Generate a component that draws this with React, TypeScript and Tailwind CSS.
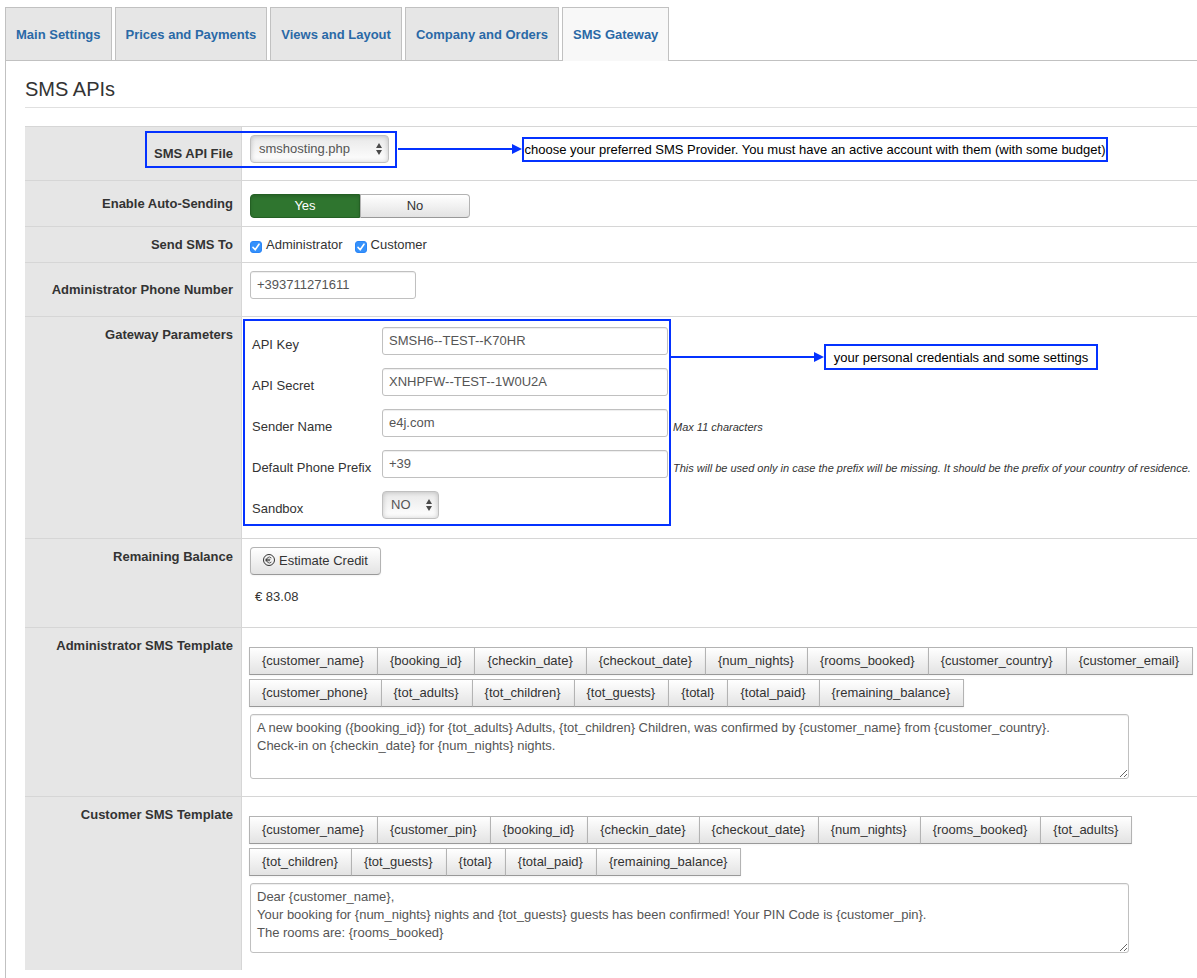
import React, { useState } from "react";

const tabs = [
  "Main Settings",
  "Prices and Payments",
  "Views and Layout",
  "Company and Orders",
  "SMS Gateway",
];

const adminTags = [
  "customer_name",
  "booking_id",
  "checkin_date",
  "checkout_date",
  "num_nights",
  "rooms_booked",
  "customer_country",
  "customer_email",
  "customer_phone",
  "tot_adults",
  "tot_children",
  "tot_guests",
  "total",
  "total_paid",
  "remaining_balance",
];

const customerTags = [
  "customer_name",
  "customer_pin",
  "booking_id",
  "checkin_date",
  "checkout_date",
  "num_nights",
  "rooms_booked",
  "tot_adults",
  "tot_children",
  "tot_guests",
  "total",
  "total_paid",
  "remaining_balance",
];

const adminMessage = `A new booking ({booking_id}) for {tot_adults} Adults, {tot_children} Children, was confirmed by {customer_name} from {customer_country}.
Check-in on {checkin_date} for {num_nights} nights.`;

const customerMessage = `Dear {customer_name},
Your booking for {num_nights} nights and {tot_guests} guests has been confirmed! Your PIN Code is {customer_pin}.
The rooms are: {rooms_booked}`;

const inputClass =
  "h-7 rounded-[3px] border border-[#c0c0c0] bg-white px-1.5 pb-0.5 text-[13px] text-[#555] shadow-[inset_0_1px_1px_rgba(0,0,0,0.07)] outline-none";

const Row = ({ label, htmlFor = undefined, middle = false, children }) => (
  <div className="relative flex border-t border-[#d6d6d6]">
    <div
      className={
        "flex w-[217px] shrink-0 justify-end border-r border-[#d6d6d6] bg-[#e6e6e6] px-2 font-bold " +
        (middle ? "items-center" : "items-start pt-[9px]")
      }
    >
      <label htmlFor={htmlFor}>{label}</label>
    </div>
    <div className="min-w-0 flex-1 py-2 pl-2">{children}</div>
  </div>
);

const Select = ({ id, className, options }) => (
  <div className={"relative h-7 " + className}>
    <select
      id={id}
      className="block h-7 w-full appearance-none rounded-[4px] border border-[#c0c0c0] bg-linear-to-b from-[#e8e8e8] to-white px-2 text-[13px] text-[#555] shadow-[inset_0_0_5px_rgba(0,0,0,0.2)] outline-none"
    >
      {options.map((o) => (
        <option key={o}>{o}</option>
      ))}
    </select>
    <svg
      viewBox="0 0 6 12"
      className="pointer-events-none absolute top-2 right-[7px] h-3 w-1.5 fill-[#4a4a4a]"
    >
      <path d="M3 0 6 5H0zM3 12 0 7h6z" />
    </svg>
  </div>
);

const Checkbox = ({ label }) => (
  <label className="flex items-center gap-1">
    <span className="relative mt-1 h-3 w-3">
      <input
        type="checkbox"
        defaultChecked
        className="peer block h-3 w-3 appearance-none rounded-[3px] border border-[#bbb] bg-white checked:border-[#2a85f7] checked:bg-[#3591fb]"
      />
      <svg
        viewBox="0 0 12 12"
        className="pointer-events-none absolute inset-0 hidden fill-none stroke-white stroke-[1.6] peer-checked:block"
      >
        <path d="M3 6.4 5.2 8.8 9 3.2" strokeLinecap="round" strokeLinejoin="round" />
      </svg>
    </span>
    {label}
  </label>
);

const TagButtons = ({ tags }) => (
  <div className="mt-[11px] mb-[7px] flex flex-wrap gap-y-1">
    {tags.map((t) => (
      <button
        key={t}
        type="button"
        className="-ml-px h-7 border border-[#b3b3b3] border-b-[#999] bg-linear-to-b from-white to-[#e3e3e3] pr-[13px] pl-3 shadow-[0_1px_2px_rgba(0,0,0,0.05)]"
      >
        {"{" + t + "}"}
      </button>
    ))}
  </div>
);

// arrow pointing at a boxed note
const Note = ({ className, arrowClass, textClass, children }) => (
  <div className={"absolute flex items-center text-black " + className}>
    <div className={"flex items-center " + arrowClass}>
      <div className="h-0.5 flex-1 bg-[#0432ff]" />
      <svg viewBox="0 0 10 10" className="h-2.5 w-2.5 fill-[#0432ff]">
        <path d="M0 0 10 5 0 10z" />
      </svg>
    </div>
    <div
      className={
        "flex items-center justify-center border-2 border-[#0432ff] bg-white whitespace-nowrap " +
        textClass
      }
    >
      {children}
    </div>
  </div>
);

const Param = ({ id, label, hint = "", children }) => (
  <div className="flex h-[37px] items-center pb-0.5">
    <label htmlFor={id} className="w-[130px] shrink-0">
      {label}
    </label>
    <div className="shrink-0 self-start">{children}</div>
    {hint && <em className="ml-[5px] text-[11px] whitespace-nowrap">{hint}</em>}
  </div>
);

const App = () => {
  const [active, setActive] = useState("SMS Gateway");
  const [autoSend, setAutoSend] = useState(true);

  return (
    <div className="flex min-h-screen flex-col overflow-hidden bg-white pt-[7px] pl-[5px] font-['Liberation_Sans',Arial,sans-serif] text-[13px] leading-[18px] text-[#333]">
      <nav className="flex gap-[3px]">
        {tabs.map((tab) => (
          <button
            key={tab}
            type="button"
            onClick={() => setActive(tab)}
            className={
              "relative -mb-px h-[54px] border border-[#c1c1c1] px-2.5 font-bold text-[#2a69a6] " +
              (tab === active ? "z-10 border-b-0 bg-[#f8f8f8]" : "bg-[#e6e6e6] pt-px")
            }
          >
            {tab}
          </button>
        ))}
      </nav>

      <main className="flex-1 border-t border-l border-[#c1c1c1] pt-2.5 pl-[19px]">
        <h1 className="mb-[18px] border-b border-[#e0e0e0] text-[20px] leading-9">SMS APIs</h1>

        <form>
          <Row label="SMS API File" htmlFor="api-file" middle>
            <Select id="api-file" className="mb-[9px] w-[139px]" options={["smshosting.php"]} />
            <div className="pointer-events-none absolute top-1 left-[120px] h-[37px] w-[252px] border-2 border-[#0432ff]" />
            <Note
              className="top-2.5 left-[373px]"
              arrowClass="w-[124px] pb-0.5"
              textClass="h-[25px] w-[586px]"
            >
              choose your preferred SMS Provider. You must have an active account with them (with
              some budget)
            </Note>
          </Row>

          <Row label="Enable Auto-Sending" middle>
            <div className="mt-[5px] flex">
              <button
                type="button"
                onClick={() => setAutoSend(true)}
                className={
                  "h-6 w-[110px] rounded-l-[4px] border " +
                  (autoSend
                    ? "border-[#246024] bg-[#2f752f] text-white shadow-[inset_0_2px_3px_rgba(0,0,0,0.15)]"
                    : "border-[#b3b3b3] bg-linear-to-b from-white to-[#e3e3e3]")
                }
              >
                Yes
              </button>
              <button
                type="button"
                onClick={() => setAutoSend(false)}
                className={
                  "h-6 w-[110px] rounded-r-[4px] border " +
                  (autoSend
                    ? "border-[#b3b3b3] border-b-[#999] bg-linear-to-b from-white to-[#e3e3e3]"
                    : "border-[#802420] bg-[#bd362f] text-white")
                }
              >
                No
              </button>
            </div>
          </Row>

          <Row label="Send SMS To" middle>
            <div className="flex gap-3 leading-[19px]">
              <Checkbox label="Administrator" />
              <Checkbox label="Customer" />
            </div>
          </Row>

          <Row label="Administrator Phone Number" htmlFor="admin-phone" middle>
            <input
              id="admin-phone"
              type="text"
              defaultValue="+393711271611"
              className={inputClass + " mb-[9px] block w-[166px]"}
            />
          </Row>

          <Row label="Gateway Parameters">
            <div className="flex flex-col gap-1 p-0.5">
              <Param id="api-key" label="API Key">
                <input
                  id="api-key"
                  type="text"
                  defaultValue="SMSH6--TEST--K70HR"
                  className={inputClass + " block w-[286px]"}
                />
              </Param>
              <Param id="api-secret" label="API Secret">
                <input
                  id="api-secret"
                  type="text"
                  defaultValue="XNHPFW--TEST--1W0U2A"
                  className={inputClass + " block w-[286px]"}
                />
              </Param>
              <Param id="sender" label="Sender Name" hint="Max 11 characters">
                <input
                  id="sender"
                  type="text"
                  defaultValue="e4j.com"
                  className={inputClass + " block w-[286px]"}
                />
              </Param>
              <Param
                id="prefix"
                label="Default Phone Prefix"
                hint="This will be used only in case the prefix will be missing. It should be the prefix of your country of residence."
              >
                <input
                  id="prefix"
                  type="text"
                  defaultValue="+39"
                  className={inputClass + " block w-[286px]"}
                />
              </Param>
              <Param id="sandbox" label="Sandbox">
                <Select id="sandbox" className="w-[57px]" options={["NO", "YES"]} />
              </Param>
            </div>
            <div className="pointer-events-none absolute top-0.5 left-[218px] h-[207px] w-[428px] border-2 border-[#0432ff]" />
            <Note
              className="top-[27px] left-[646px]"
              arrowClass="w-[153px]"
              textClass="h-[26px] w-[274px] pt-0.5"
            >
              your personal credentials and some settings
            </Note>
          </Row>

          <Row label="Remaining Balance">
            <button
              type="button"
              className="flex h-7 items-center gap-1 rounded-[4px] border border-[#b3b3b3] border-b-[#999] bg-linear-to-b from-white to-[#e3e3e3] px-3 shadow-[0_1px_2px_rgba(0,0,0,0.05)]"
            >
              <svg viewBox="0 0 12 12" className="mb-0.5 h-3 w-3 fill-none stroke-[#333]">
                <circle cx="6" cy="6" r="5.5" />
                <path
                  d="M8.4 4A2.9 2.9 0 1 0 8.4 8M2.3 5.3H7.4M2.3 6.7H7"
                  strokeWidth="0.8"
                />
              </svg>
              Estimate Credit
            </button>
            <div className="my-[13px] ml-[5px]">€ 83.08</div>
          </Row>

          <Row label="Administrator SMS Template" htmlFor="admin-sms">
            <TagButtons tags={adminTags} />
            <textarea
              id="admin-sms"
              defaultValue={adminMessage}
              className="mb-[9px] block h-[65px] w-[879px] resize rounded-[3px] border border-[#c0c0c0] bg-white px-1.5 py-1 text-[#555] shadow-[inset_0_1px_1px_rgba(0,0,0,0.07)] outline-none"
            />
          </Row>

          <Row label="Customer SMS Template" htmlFor="customer-sms">
            <TagButtons tags={customerTags} />
            <textarea
              id="customer-sms"
              defaultValue={customerMessage}
              className="mb-[9px] block h-[70px] w-[879px] resize rounded-[3px] border border-[#c0c0c0] bg-white px-1.5 py-1 text-[#555] shadow-[inset_0_1px_1px_rgba(0,0,0,0.07)] outline-none"
            />
          </Row>
        </form>
      </main>
    </div>
  );
};

export default App;
